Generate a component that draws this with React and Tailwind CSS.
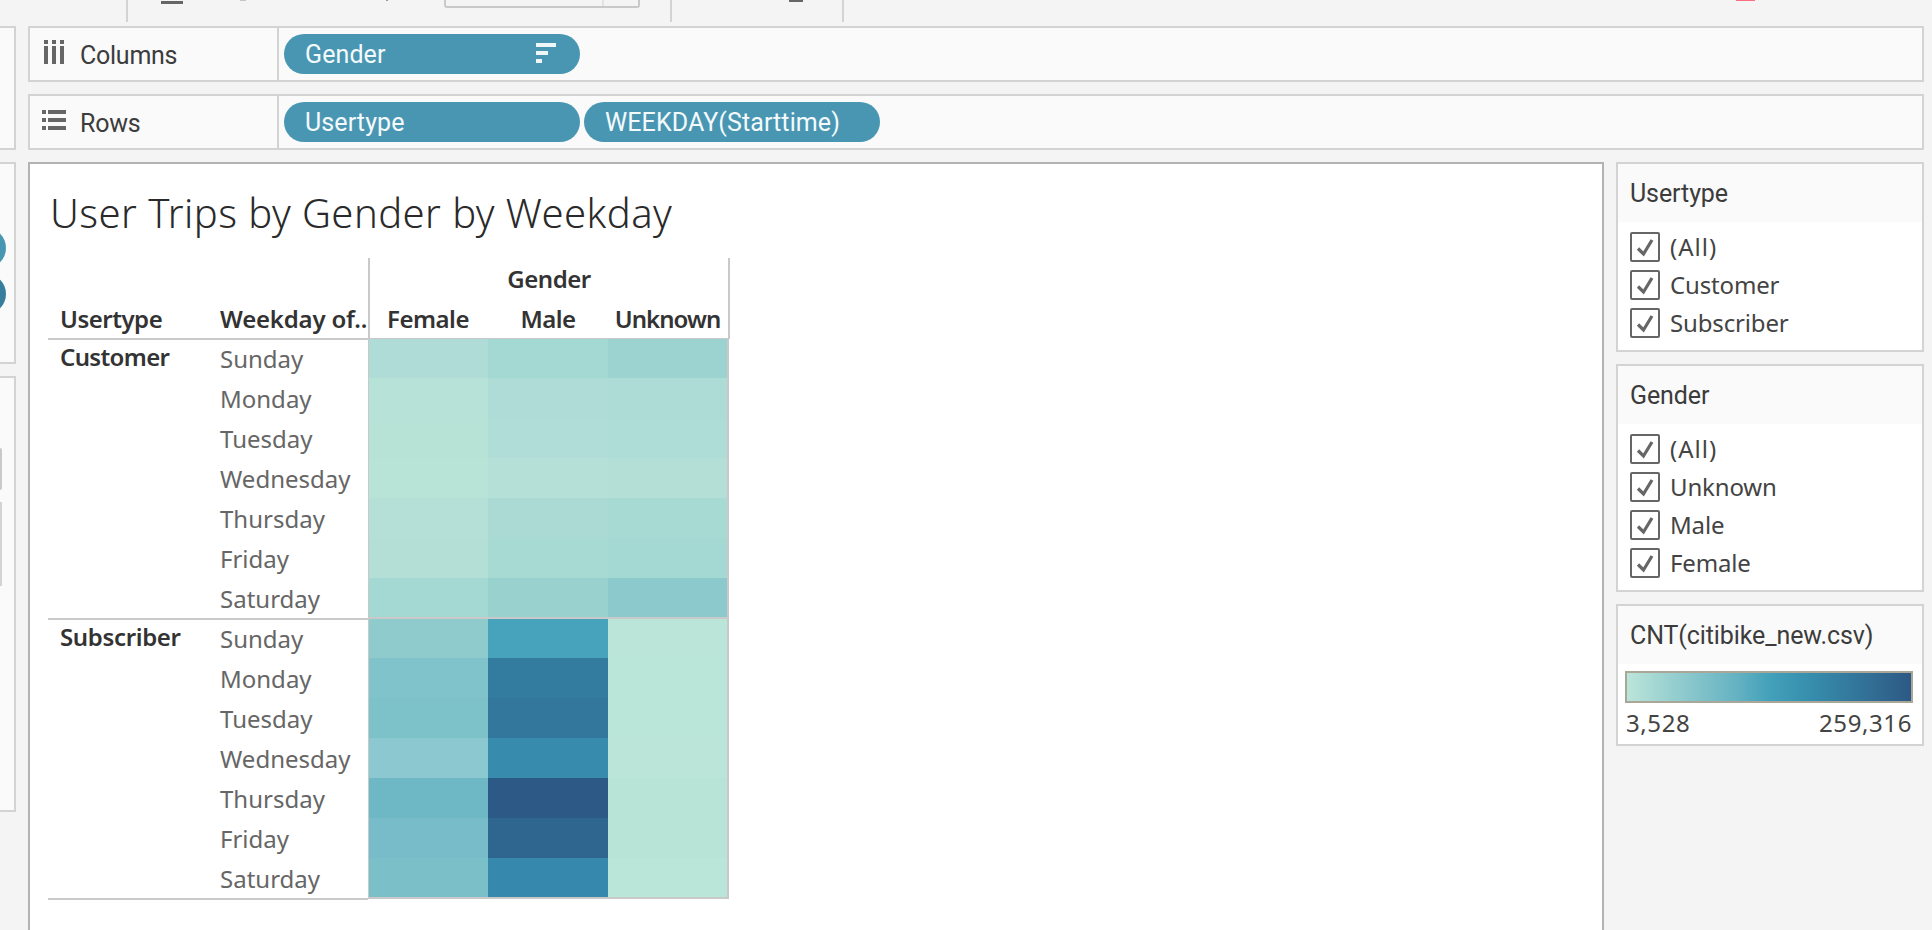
const DAYS = ["Sunday", "Monday", "Tuesday", "Wednesday", "Thursday", "Friday", "Saturday"];

const GROUPS = [
  {
    name: "Customer",
    colors: [
      ["#afdcd7", "#a4d8d3", "#9cd3d0"],
      ["#b6e2d7", "#afdcd7", "#addbd6"],
      ["#b7e3d7", "#b0ddd8", "#aedcd7"],
      ["#b8e4d7", "#b4e0d7", "#b3dfd7"],
      ["#b4e0d7", "#abdad5", "#a8dad4"],
      ["#b3dfd6", "#a8dad4", "#a4d8d3"],
      ["#a4d8d3", "#99d1cf", "#8bc9cc"],
    ],
  },
  {
    name: "Subscriber",
    colors: [
      ["#8fcacd", "#47a2bb", "#bce5da"],
      ["#80c3ca", "#347ba0", "#bae5d9"],
      ["#7dc2c9", "#33779c", "#bae5d9"],
      ["#8bc8cf", "#378bac", "#bce5da"],
      ["#6eb8c6", "#2c5985", "#b8e4d8"],
      ["#77bcc8", "#2f6690", "#b8e4d8"],
      ["#7bbfc9", "#3688ad", "#bae5d9"],
    ],
  },
];

function ColumnsIcon() {
  return (
    <svg width="20" height="24" viewBox="0 0 20 24" fill="#666" shapeRendering="crispEdges">
      {[0, 8, 16].map((x) => (
        <g key={x}>
          <rect x={x} y="0" width="4" height="4" />
          <rect x={x} y="6" width="4" height="18" />
        </g>
      ))}
    </svg>
  );
}

function RowsIcon() {
  return (
    <svg width="24" height="20" viewBox="0 0 24 20" fill="#666" shapeRendering="crispEdges">
      {[0, 8, 16].map((y) => (
        <g key={y}>
          <rect x="0" y={y} width="4" height="4" />
          <rect x="6" y={y} width="18" height="4" />
        </g>
      ))}
    </svg>
  );
}

function SortIcon() {
  return (
    <svg width="20" height="20" viewBox="0 0 20 20" fill="#f0f7fa" shapeRendering="crispEdges">
      <rect width="20" height="4" />
      <rect y="8" width="12" height="4" />
      <rect y="16" width="6" height="4" />
    </svg>
  );
}

function Pill({ label, sorted }) {
  return (
    <div className="flex h-10 w-[296px] items-center justify-between rounded-full bg-[#4996b3] pr-6 pl-[21px] text-[#f4fafc]">
      <span className="pt-px tracking-[0.1px]">{label}</span>
      {sorted && <span className="-mt-0.5"><SortIcon /></span>}
    </div>
  );
}

function Shelf({ icon, label, children }) {
  return (
    <div className="flex h-14 border-2 border-[#d3d3d3] bg-[#fafafa] font-['Roboto',sans-serif] text-[25px] leading-10">
      <div className="flex w-[249px] border-r-2 border-[#d3d3d3] text-[#3c3c3c]">
        <div className="w-[50px]">{icon}</div>
        <div className="pt-2 tracking-[-0.25px]">{label}</div>
      </div>
      <div className="flex gap-1 py-1.5 pl-[5px]">{children}</div>
    </div>
  );
}

function Toolbar() {
  return (
    <div className="flex h-[26px] shrink-0 items-start overflow-hidden">
      <div className="h-[22px] w-0.5 ml-[126px] bg-[#d3d3d3]" />
      <div className="mt-px ml-[33px] h-[3px] w-[22px] bg-[#666]" />
      <div className="ml-[57px] h-px w-[6px] bg-[#c4c4c4]" />
      <div className="ml-[140px] h-px w-[2px] bg-[#999]" />
      <div className="ml-14 flex h-2 w-[196px] rounded-b-[3px] border-2 border-t-0 border-[#c9c9c9]">
        <div className="ml-[156px] w-0.5 bg-[#e3e3e3]" />
      </div>
      <div className="ml-[30px] h-[22px] w-0.5 bg-[#d3d3d3]" />
      <div className="ml-[117px] h-0.5 w-[14px] bg-[#666]" />
      <div className="ml-[39px] h-[22px] w-0.5 bg-[#d3d3d3]" />
      <div className="ml-[892px] h-px w-[19px] bg-[#fb6e82]" />
    </div>
  );
}

function LeftRail() {
  return (
    <div className="flex w-4 shrink-0 flex-col gap-3 overflow-hidden">
      <div className="h-[124px] border-2 border-l-0 border-[#d3d3d3] bg-[#fafafa]" />
      <div className="h-[202px] border-2 border-l-0 border-[#d3d3d3] bg-[#fafafa] pt-16">
        <div className="-ml-[34px] h-10 w-10 rounded-full bg-[#4996b3]" />
        <div className="mt-1.5 -ml-[34px] h-10 w-10 rounded-full bg-[#377e9c]" />
      </div>
      <div className="h-[436px] border-2 border-l-0 border-[#d3d3d3] bg-[#fafafa] pt-[70px]">
        <div className="h-[42px] w-0.5 rounded-r-sm bg-[#c9c9c9]" />
        <div className="mt-3 h-[84px] w-0.5 bg-[#d3d3d3]" />
      </div>
    </div>
  );
}

function CrossTab() {
  return (
    <div className="mt-4 ml-[18px] w-[682px] text-[24px] leading-10 text-[#333]">
      <div className="flex font-semibold tracking-[-0.5px]">
        <div className="flex h-[82px] w-80 items-end border-b-2 border-[#c9c9c9]">
          <div className="-mb-px w-40 pl-3">Usertype</div>
          <div className="-mb-px w-40 pl-3 tracking-[-0.2px] whitespace-nowrap">Weekday of..</div>
        </div>
        <div className="flex h-[81px] w-[362px] flex-col border-x-2 border-b border-[#c9c9c9]">
          <div className="pt-px text-center">Gender</div>
          <div className="grid h-10 grid-cols-[118px_120px_120px] text-center">
            <div className="-ml-0.5">Female</div>
            <div>Male</div>
            <div className="-ml-px tracking-[-0.95px]">Unknown</div>
          </div>
        </div>
      </div>
      {GROUPS.map((group, g) => (
        <div key={group.name} className="flex h-[280px]">
          <div className="flex h-[280px] w-80 border-b-2 border-[#c9c9c9]">
            <div className={`w-40 pl-3 leading-[34px] font-semibold ${g === 0 ? "tracking-[-0.65px]" : "tracking-[-0.35px]"}`}>{group.name}</div>
            <div className="-mt-px w-40 pl-3 text-[#666]">
              {DAYS.map((d) => (
                <div key={d} className="h-10">{d}</div>
              ))}
            </div>
          </div>
          <div className="-mt-px grid h-[280px] w-[361px] grid-cols-[119px_120px_119px] grid-rows-[39px_repeat(5,40px)_39px] border-r-2 border-b-2 border-l border-[#c9c9c9]">
            {group.colors.flat().map((c, i) => (
              <div key={g * 100 + i} style={{ backgroundColor: c }} />
            ))}
          </div>
        </div>
      ))}
    </div>
  );
}

function Card({ title, className, children }) {
  return (
    <div className={`border-2 border-[#d3d3d3] bg-white text-[#3c3c3c] ${className}`}>
      <div className="h-[58px] bg-[#fafafa] pl-3 font-['Roboto',sans-serif] text-[25px] leading-[60px] tracking-[-0.1px]">{title}</div>
      {children}
    </div>
  );
}

function FilterOption({ label }) {
  return (
    <div className="flex h-[30px] items-center gap-[10px]">
      <svg width="30" height="30" viewBox="0 0 30 30" fill="none">
        <rect x="1" y="1" width="28" height="28" rx="1" stroke="#666" strokeWidth="2" />
        <path d="M8 16.5 L13.5 22 L22 8" stroke="#666" strokeWidth="3.2" />
      </svg>
      <span className={`text-[24px] leading-[30px] text-[#444] ${label === "(All)" ? "tracking-[1px]" : "tracking-[-0.15px]"}`}>{label}</span>
    </div>
  );
}

function Filter({ title, options, className }) {
  return (
    <Card title={title} className={className}>
      <div className="flex flex-col gap-2 pt-[10px] pl-3">
        {options.map((o) => (
          <FilterOption key={o} label={o} />
        ))}
      </div>
    </Card>
  );
}

export default function App() {
  return (
    <div className="flex h-[930px] w-[1932px] flex-col overflow-hidden bg-[#f4f4f4] font-['Noto_Sans',sans-serif]">
      <Toolbar />
      <div className="flex min-h-0 flex-1 gap-3 pr-2">
        <LeftRail />
        <div className="flex min-w-0 flex-1 flex-col gap-3">
          <Shelf icon={<div className="pt-3 pl-[14px]"><ColumnsIcon /></div>} label="Columns">
            <Pill label="Gender" sorted />
          </Shelf>
          <Shelf icon={<div className="pt-[14px] pl-3"><RowsIcon /></div>} label="Rows">
            <Pill label="Usertype" />
            <Pill label="WEEKDAY(Starttime)" />
          </Shelf>
          <div className="flex min-h-0 flex-1 gap-3">
            <div className="w-[1576px] shrink-0 border-2 border-b-0 border-[#b3b3b3] bg-white">
              <h1 className="mt-5 ml-5 h-[58px] text-[40px] leading-[58px] font-light tracking-[0.45px] text-[#2a2a2a]">User Trips by Gender by Weekday</h1>
              <CrossTab />
            </div>
            <div className="flex flex-1 flex-col gap-3">
              <Filter title="Usertype" className="h-[190px]" options={["(All)", "Customer", "Subscriber"]} />
              <Filter title="Gender" className="h-[228px]" options={["(All)", "Unknown", "Male", "Female"]} />
              <Card title="CNT(citibike_new.csv)" className="h-[142px]">
                <div className="mt-[7px] ml-[7px] h-8 w-72 border-2 border-[#aaa698] bg-[linear-gradient(to_right,#bce5da,#9fd4d1_12%,#83c3ca_25%,#66b3c3_38%,#44a1ba_50%,#3690ae_63%,#347ea2_75%,#316b92_88%,#2c5985)]" />
                <div className="flex justify-between pr-[10px] pl-2 text-[24px] leading-10 tracking-[0.6px] text-[#444]">
                  <span>3,528</span>
                  <span>259,316</span>
                </div>
              </Card>
            </div>
          </div>
        </div>
      </div>
    </div>
  );
}
